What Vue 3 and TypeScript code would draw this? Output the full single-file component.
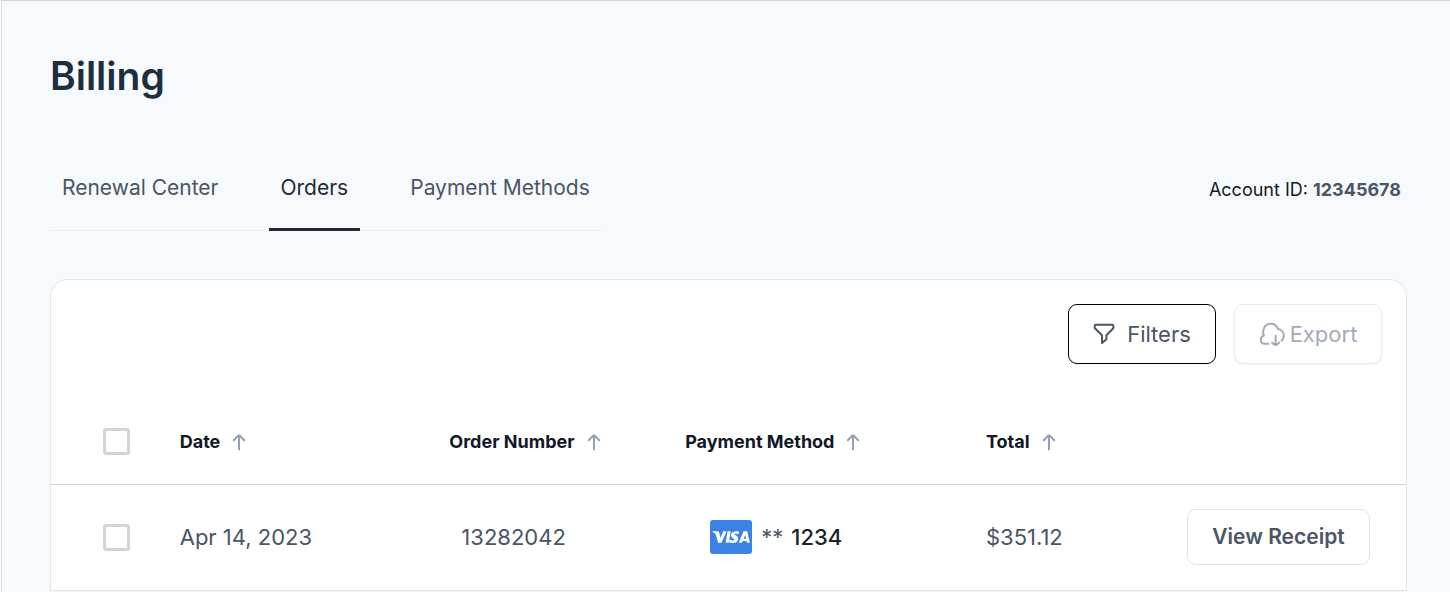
<script setup lang="ts">
import { computed, ref } from 'vue'

interface Order {
  date: string
  number: string
  last4: string
  total: string
}

const tabs = ['Renewal Center', 'Orders', 'Payment Methods']
const activeTab = ref('Orders')

const columns = [
  { key: 'date', label: 'Date' },
  { key: 'order', label: 'Order Number' },
  { key: 'payment', label: 'Payment Method' },
  { key: 'total', label: 'Total' },
]

const orders: Order[] = [
  { date: 'Apr 14, 2023', number: '13282042', last4: '1234', total: '$351.12' },
]

const selected = ref<string[]>([])
const allSelected = computed(() => selected.value.length === orders.length)

function toggleAll() {
  selected.value = allSelected.value ? [] : orders.map((o) => o.number)
}
</script>

<template>
  <main class="page">
    <h1 class="title">Billing</h1>

    <div class="subhead">
      <nav class="tabs" aria-label="Billing sections">
        <a
          v-for="tab in tabs"
          :key="tab"
          href="#"
          class="tab"
          :class="{ active: tab === activeTab }"
          :aria-current="tab === activeTab ? 'page' : undefined"
          @click.prevent="activeTab = tab"
        >{{ tab }}</a>
      </nav>
      <p class="account">Account ID: <strong>12345678</strong></p>
    </div>

    <section class="card">
      <div class="toolbar">
        <button type="button" class="tool filters">
          <svg width="22" height="22" viewBox="0 0 22 22" fill="none" stroke="currentColor" stroke-width="2" stroke-linejoin="round" aria-hidden="true">
            <path d="M2.6 1.8H19.4Q20.4 1.8 20.4 2.8V4.4Q20.4 5.2 19.8 5.8L13.4 12.2V16.2L9 20V12.2L2.4 5.8Q1.7 5.2 1.7 4.4V2.8Q1.7 1.8 2.6 1.8Z" />
          </svg>
          <span>Filters</span>
        </button>
        <button type="button" class="tool export" disabled>
          <svg width="26" height="26" viewBox="0 0 26 26" fill="none" stroke="currentColor" stroke-width="2" stroke-linecap="round" stroke-linejoin="round" aria-hidden="true">
            <path d="M9.5 22.8H5.6C3.2 22.8 1.8 21 1.8 18.8C1.8 16.6 3.2 15 5 14.6C3.8 12.8 4 10.600 4.500 9C5.400 5.200 8.200 2.800 11.800 2.800C15.200 2.800 18 5 18.800 8C22.200 8.400 24.800 11 24.800 14.600C24.800 16.800 24 18.600 22.600 19.800" />
            <path d="M16.600 14.800V24M13 21.600L16 24H17.200L20.200 21.600" />
          </svg>
          <span>Export</span>
        </button>
      </div>

      <table class="orders">
        <colgroup>
          <col class="c-check" />
          <col class="c-date" />
          <col class="c-order" />
          <col class="c-payment" />
          <col class="c-total" />
          <col class="c-action" />
        </colgroup>
        <thead>
          <tr>
            <th class="check">
              <input type="checkbox" aria-label="Select all orders" :checked="allSelected" @change="toggleAll" />
            </th>
            <th v-for="col in columns" :key="col.key" scope="col">
              <button type="button" class="sort">
                {{ col.label }}
                <svg width="14" height="18" viewBox="0 0 14 18" fill="none" stroke="currentColor" stroke-width="2" stroke-linecap="round" stroke-linejoin="round" aria-hidden="true">
                  <path d="M7 16.500V2.500M1.800 7.200L6.400 2.500H7.600L12.200 7.200" />
                </svg>
              </button>
            </th>
            <td></td>
          </tr>
        </thead>
        <tbody>
          <tr v-for="order in orders" :key="order.number">
            <td class="check">
              <input v-model="selected" type="checkbox" :value="order.number" :aria-label="`Select order ${order.number}`" />
            </td>
            <td>{{ order.date }}</td>
            <td class="number">{{ order.number }}</td>
            <td class="payment">
              <div class="method">
                <svg class="visa" width="42" height="34" viewBox="0 0 42 34" role="img" aria-label="Visa">
                  <rect width="42" height="34" rx="3" fill="#3b82e6" />
                  <g fill="#fff">
                    <path d="M2.500 11.300H7.900Q8.900 11.300 9.200 12.400L10.300 18L13.300 11.300H16.600L11.500 22.800H8.100L5.800 14.600Q5 12.600 2.500 11.900Z" />
                    <path d="M17.600 11.300H20.700L18.700 22.800H15.600Z" />
                    <path d="M29 11.700L28.500 14.300Q26.900 13.600 25.500 13.700C24.200 13.800 24.200 14.600 25.200 15.100C27.400 16.100 28.500 17.200 28.200 19.200C27.800 22.100 24.800 23.100 22 23Q20.300 22.900 19 22.300L19.500 19.600Q21.200 20.500 22.700 20.500C24.800 20.400 25.200 19.400 23.800 18.700C22 17.800 20.700 16.800 21 14.800C21.600 11.500 25.700 10.500 29 11.700Z" />
                    <path d="M33.500 11.300H37.300L39.800 22.800H36.900L36.600 21.100H32.700L32 22.800H28.800L33.500 11.300ZM35.200 14.900L33.600 18.800H36.100Z" fill-rule="evenodd" />
                  </g>
                </svg>
                <span>** <b>{{ order.last4 }}</b></span>
              </div>
            </td>
            <td>{{ order.total }}</td>
            <td class="action">
              <button type="button" class="receipt">View Receipt</button>
            </td>
          </tr>
        </tbody>
      </table>
    </section>
  </main>
</template>

<style>
body {
  background: #f7fafd;
}
</style>

<style scoped>
.page {
  box-sizing: border-box;
  min-height: 100vh;
  margin-left: 1px;
  padding: 48px 43px 0 48px;
  border-top: 1px solid #d1d5db;
  border-left: 1px solid #e0e3e7;
  background: #f7fafd;
  color: #4a5565;
  font-family: Inter, "Liberation Sans", sans-serif;
  font-size: 22px;
  line-height: 32px;
}

.title {
  margin: 0;
  color: #1b2f3f;
  font-size: 39px;
  font-weight: 600;
  line-height: 54px;
}

.subhead {
  display: flex;
  justify-content: space-between;
  align-items: flex-start;
  margin-top: 44px;
}

.tabs {
  display: flex;
  gap: 38px;
  border-bottom: 1px solid #ebeef2;
}

.tab {
  padding: 25px 12px 24px;
  margin-bottom: -1px;
  border-bottom: 3px solid transparent;
  color: #4a5565;
  font-size: 21px;
  text-decoration: none;
}

.tab.active {
  border-color: #1e293b;
  color: #1e293b;
}

.account {
  margin: 27px 6px 0 0;
  color: #111827;
  font-size: 18px;
}

.account strong {
  color: #4a5565;
  font-weight: 700;
}

.card {
  margin-top: 48px;
  border: 1px solid #e4e7eb;
  border-bottom: 0;
  border-radius: 18px 18px 0 0;
  background: #fff;
}

.toolbar {
  display: flex;
  justify-content: flex-end;
  gap: 18px;
  padding: 24px 24px 36px;
}

button {
  font-family: inherit;
  cursor: pointer;
}

.tool {
  box-sizing: border-box;
  display: flex;
  align-items: center;
  justify-content: center;
  width: 148px;
  height: 60px;
  padding: 0;
  border: 1px solid #000;
  border-radius: 9px;
  background: #fff;
  box-shadow: 0 1px 2px rgba(0, 0, 0, 0.05);
  color: #4a5565;
  font-size: 22px;
  line-height: 32px;
}

.filters {
  gap: 12px;
}

.export {
  gap: 5px;
  border-color: #e8eaec;
  color: #a4abb5;
  cursor: default;
}

.orders {
  width: 100%;
  border-collapse: collapse;
  table-layout: fixed;
}

.c-check { width: 9.5%; }
.c-date { width: 19.9%; }
.c-order { width: 17.4%; }
.c-payment { width: 22.2%; }
.c-total { width: 14.8%; }
.c-action { width: 16.2%; }

th,
td {
  padding: 0;
  text-align: left;
  vertical-align: middle;
}

thead tr {
  height: 84px;
  border-bottom: 1px solid #d1d5db;
}

tbody tr {
  height: 106px;
  border-bottom: 1px solid #dfe2e6;
}

.check {
  padding-left: 52px;
}

.check input {
  appearance: none;
  display: block;
  box-sizing: border-box;
  width: 27px;
  height: 27px;
  margin: 0;
  border: 3px solid #d1d5db;
  border-radius: 3px;
  background: #fff;
}

.check input:checked {
  background: #1e293b;
}

.sort {
  display: flex;
  align-items: center;
  gap: 12px;
  padding: 0;
  border: 0;
  background: none;
  color: #111827;
  font-size: 18px;
  font-weight: 700;
  line-height: 32px;
}

.sort svg {
  color: #94a0b3;
}

.number {
  padding-left: 12px;
}

.payment {
  padding-left: 25px;
}

.method {
  display: flex;
  align-items: center;
  gap: 9px;
}

.method b {
  margin-left: 2px;
  color: #222;
  font-weight: 500;
}

.action {
  padding-right: 36px;
}

.receipt {
  box-sizing: border-box;
  display: block;
  width: 183px;
  height: 56px;
  margin-left: auto;
  padding: 0;
  border: 1px solid #dfe3e6;
  border-radius: 9px;
  background: #fff;
  color: #4a5565;
  font-size: 21px;
  font-weight: 600;
  line-height: 32px;
}
</style>
